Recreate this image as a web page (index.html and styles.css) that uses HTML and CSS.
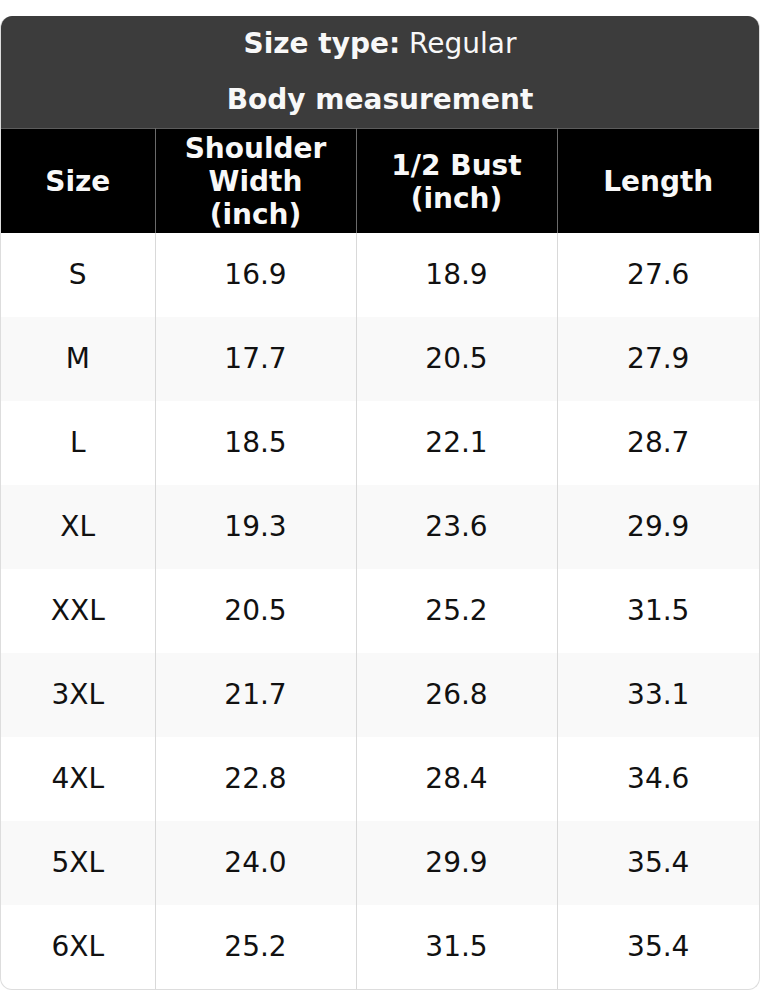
FILE: index.html
```html
<!DOCTYPE html>
<html>
<head>
<meta charset="utf-8">
<link rel="stylesheet" href="styles.css">
</head>
<body>
<div class="chart">
  <div class="title"><b>Size type:</b> Regular</div>
  <div class="subtitle">Body measurement</div>
  <table class="grid">
    <colgroup>
      <col class="c1"><col class="c2"><col class="c3"><col class="c4">
    </colgroup>
    <thead>
      <tr><th>Size</th><th>Shoulder<br>Width<br>(inch)</th><th>1/2 Bust<br>(inch)</th><th>Length</th></tr>
    </thead>
    <tbody>
      <tr><td>S</td><td>16.9</td><td>18.9</td><td>27.6</td></tr>
      <tr><td>M</td><td>17.7</td><td>20.5</td><td>27.9</td></tr>
      <tr><td>L</td><td>18.5</td><td>22.1</td><td>28.7</td></tr>
      <tr><td>XL</td><td>19.3</td><td>23.6</td><td>29.9</td></tr>
      <tr><td>XXL</td><td>20.5</td><td>25.2</td><td>31.5</td></tr>
      <tr><td>3XL</td><td>21.7</td><td>26.8</td><td>33.1</td></tr>
      <tr><td>4XL</td><td>22.8</td><td>28.4</td><td>34.6</td></tr>
      <tr><td>5XL</td><td>24.0</td><td>29.9</td><td>35.4</td></tr>
      <tr><td>6XL</td><td>25.2</td><td>31.5</td><td>35.4</td></tr>
    </tbody>
  </table>
</div>
</body>
</html>
```
FILE: styles.css
```css
html, body {
  margin: 0;
  padding: 0;
  background: #ffffff;
}
body {
  font-family: "DejaVu Sans", sans-serif;
  font-size: 28px;
  color: #111111;
}
.chart {
  margin-top: 16px;
  width: 760px;
  border-radius: 12px;
  overflow: hidden;
  border: 1px solid #dddddd;
  border-top: none;
  box-sizing: border-box;
  background: #ffffff;
}
.title, .subtitle {
  background: #3c3c3c;
  color: #f8f8f8;
  text-align: center;
  height: 56px;
  line-height: 56px;
}
.subtitle {
  font-weight: bold;
}
.grid {
  width: 100%;
  border-collapse: collapse;
  table-layout: fixed;
}
.c1 { width: 154px; }
.c2 { width: 201px; }
.c3 { width: 201px; }
.c4 { width: auto; }
.grid th {
  background: #000000;
  color: #f8f8f8;
  font-weight: bold;
  height: 104px;
  padding: 2px 4px 0;
  line-height: 33px;
  border-top: 1px solid #5c5c5c;
  border-left: 1px solid #6a6a6a;
  border-right: 1px solid #6a6a6a;
  box-sizing: border-box;
}
.grid th:first-child { border-left: none; }
.grid th:last-child { border-right: none; }
.grid td {
  text-align: center;
  height: 84px;
  padding: 0;
  border-left: 1px solid #d9d9d9;
  border-right: 1px solid #d9d9d9;
}
.grid td:first-child { border-left: none; }
.grid td:last-child { border-right: none; }
.grid tbody tr:nth-child(even) td {
  background: #f9f9f9;
}
```
